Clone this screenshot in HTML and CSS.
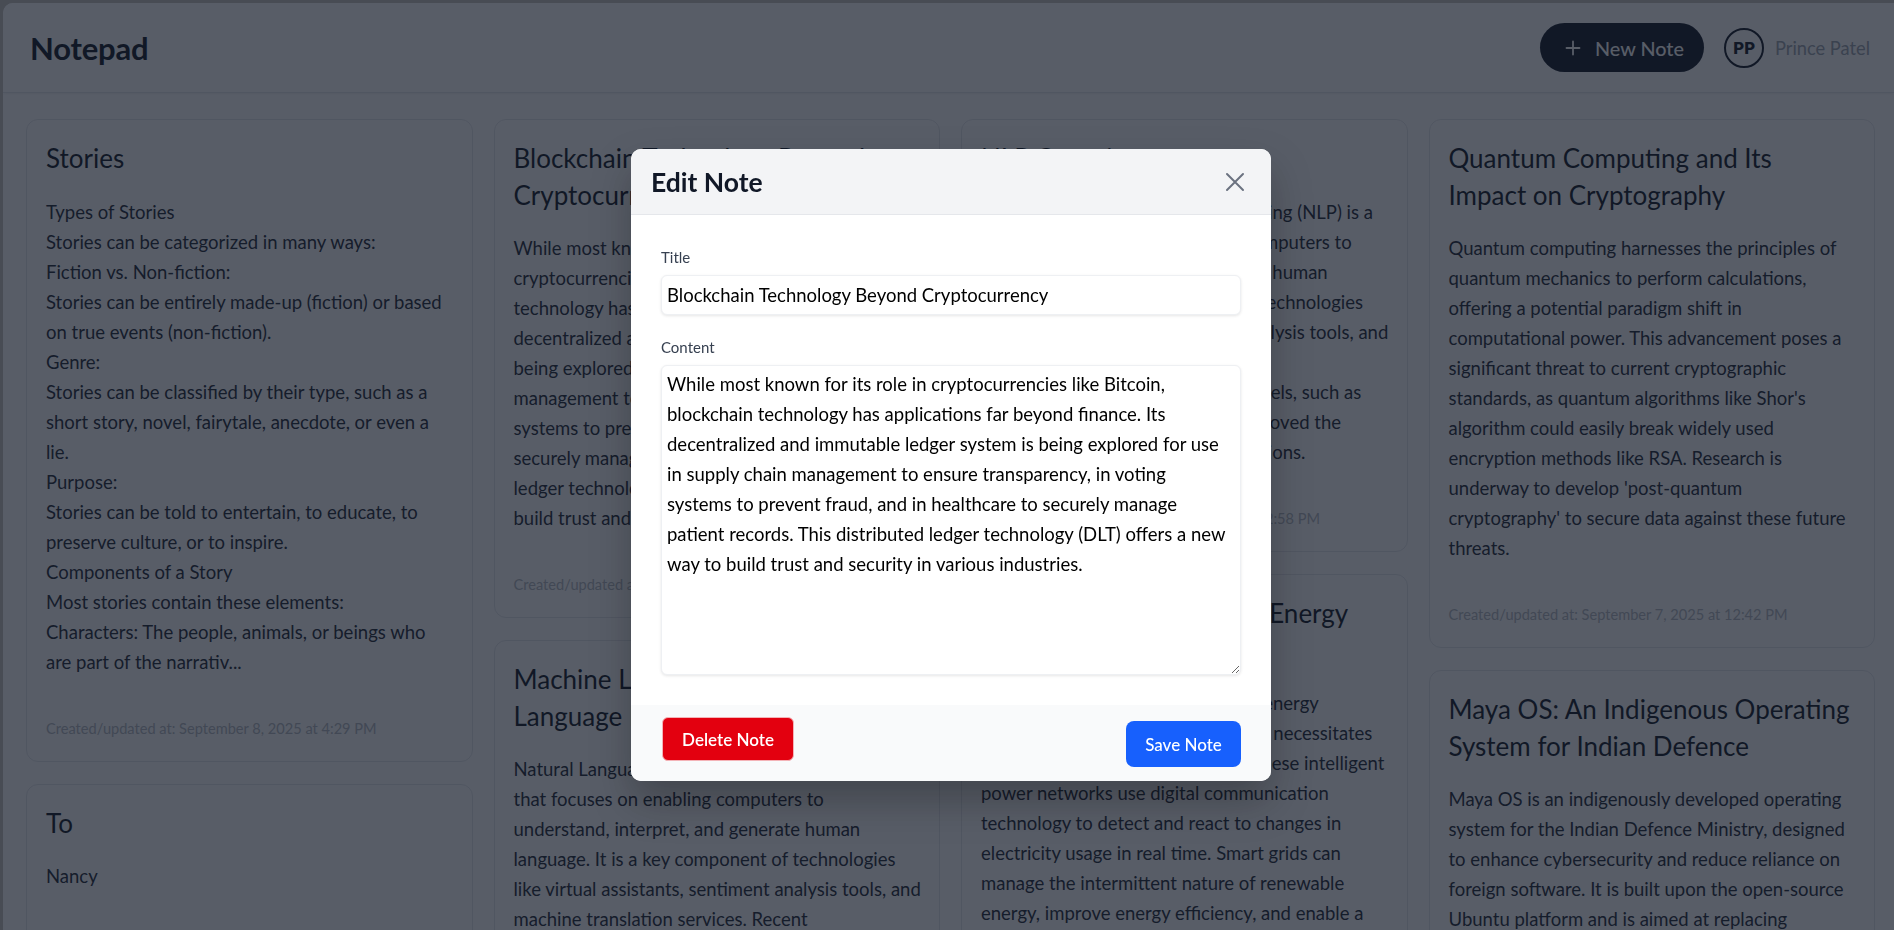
FILE: index.html
```html
<!DOCTYPE html>
<html lang="en">
<head>
<meta charset="utf-8">
<title>Notepad</title>
<link rel="stylesheet" href="styles.css">
</head>
<body>
<div class="app">
  <header class="topbar">
    <h1 class="brand">Notepad</h1>
    <div class="actions">
      <button class="new-btn" type="button">
        <svg class="plus" viewBox="0 0 16 16" width="16" height="16" aria-hidden="true"><path d="M8 1.5v13M1.5 8h13" stroke="currentColor" stroke-width="1.8" stroke-linecap="round" fill="none"/></svg>
        <span>New Note</span>
      </button>
      <div class="user">
        <span class="avatar">PP</span>
        <span class="username">Prince Patel</span>
      </div>
    </div>
  </header>

  <main class="board">
    <div class="col">
      <article class="card">
        <h2 class="card-title">Stories</h2>
<p class="card-body">Types of Stories
Stories can be categorized in many ways:
Fiction vs. Non-fiction:
Stories can be entirely made-up (fiction) or based
on true events (non-fiction).
Genre:
Stories can be classified by their type, such as a
short story, novel, fairytale, anecdote, or even a
lie.
Purpose:
Stories can be told to entertain, to educate, to
preserve culture, or to inspire.
Components of a Story
Most stories contain these elements:
Characters: The people, animals, or beings who
are part of the narrativ...</p>
        <p class="card-meta">Created/updated at: September 8, 2025 at 4:29 PM</p>
      </article>
      <article class="card">
        <h2 class="card-title">To</h2>
<p class="card-body">Nancy</p>
        <p class="card-meta">Created/updated at: September 8, 2025 at 4:12 PM</p>
      </article>
    </div>

    <div class="col">
      <article class="card">
        <h2 class="card-title">Blockchain Technology Beyond Cryptocurrency</h2>
<p class="card-body">While most known for its role in
cryptocurrencies like Bitcoin, blockchain
technology has applications far beyond finance. Its
decentralized and immutable ledger system is
being explored for use in supply chain
management to ensure transparency, in voting
systems to prevent fraud, and in healthcare to
securely manage patient records. This distributed
ledger technology (DLT) offers a new way to
build trust and security in various industries.</p>
        <p class="card-meta">Created/updated at: September 7, 2025 at 1:05 PM</p>
      </article>
      <article class="card">
        <h2 class="card-title">Machine Learning and Natural Language Processing</h2>
<p class="card-body">Natural Language Processing (NLP) is a field of AI
that focuses on enabling computers to
understand, interpret, and generate human
language. It is a key component of technologies
like virtual assistants, sentiment analysis tools, and
machine translation services. Recent
advancements in deep learning have made these
systems far more accurate and capable.</p>
        <p class="card-meta">Created/updated at: September 7, 2025 at 12:55 PM</p>
      </article>
    </div>

    <div class="col">
      <article class="card">
        <h2 class="card-title">NLP Overview</h2>
<p class="card-body">Basically, Natural Language Processing (NLP) is a
branch that focuses on enabling computers to
understand, interpret, and generate human
language. It is a key component of technologies
like virtual assistants, sentiment analysis tools, and
machine translation models. Recent
transformer-based AI language models, such as
GPT and BERT have drastically improved the
speed and accuracy of NLP applications.</p>
        <p class="card-meta">Created/updated at: September 7, 2025 at 12:58 PM</p>
      </article>
      <article class="card">
        <h2 class="card-title">Smart Grid in Renewable Energy Management</h2>
<p class="card-body">Smart grids are revolutionizing the energy
landscape. The boom in renewables necessitates
smarter and more adaptive grids. These intelligent
power networks use digital communication
technology to detect and react to changes in
electricity usage in real time. Smart grids can
manage the intermittent nature of renewable
energy, improve energy efficiency, and enable a
more resilient power supply for homes and
industries.</p>
        <p class="card-meta">Created/updated at: September 7, 2025 at 12:50 PM</p>
      </article>
    </div>

    <div class="col">
      <article class="card">
        <h2 class="card-title">Quantum Computing and Its Impact on Cryptography</h2>
<p class="card-body">Quantum computing harnesses the principles of
quantum mechanics to perform calculations,
offering a potential paradigm shift in
computational power. This advancement poses a
significant threat to current cryptographic
standards, as quantum algorithms like Shor's
algorithm could easily break widely used
encryption methods like RSA. Research is
underway to develop 'post-quantum
cryptography' to secure data against these future
threats.</p>
        <p class="card-meta">Created/updated at: September 7, 2025 at 12:42 PM</p>
      </article>
      <article class="card">
        <h2 class="card-title">Maya OS: An Indigenous Operating System for Indian Defence</h2>
<p class="card-body">Maya OS is an indigenously developed operating
system for the Indian Defence Ministry, designed
to enhance cybersecurity and reduce reliance on
foreign software. It is built upon the open-source
Ubuntu platform and is aimed at replacing
Microsoft Windows on all defence computers
connected to the internet.</p>
        <p class="card-meta">Created/updated at: September 7, 2025 at 12:30 PM</p>
      </article>
    </div>
  </main>
</div>

<div class="overlay">
  <div class="modal" role="dialog" aria-label="Edit Note">
    <div class="modal-head">
      <h2 class="modal-title">Edit Note</h2>
      <button class="close" type="button" aria-label="Close">
        <svg viewBox="0 0 20 20" width="20" height="20" aria-hidden="true"><path d="M2 2l16 16M18 2L2 18" stroke="currentColor" stroke-width="2" stroke-linecap="round" fill="none"/></svg>
      </button>
    </div>
    <div class="modal-body">
      <label class="field-label" for="title">Title</label>
      <input class="field-input" id="title" type="text" value="Blockchain Technology Beyond Cryptocurrency">
      <label class="field-label" for="content">Content</label>
      <textarea class="field-area" id="content">While most known for its role in cryptocurrencies like Bitcoin, blockchain technology has applications far beyond finance. Its decentralized and immutable ledger system is being explored for use in supply chain management to ensure transparency, in voting systems to prevent fraud, and in healthcare to securely manage patient records. This distributed ledger technology (DLT) offers a new way to build trust and security in various industries.</textarea>
    </div>
    <div class="modal-foot">
      <button class="btn-delete" type="button">Delete Note</button>
      <button class="btn-save" type="button">Save Note</button>
    </div>
  </div>
</div>
</body>
</html>
```

FILE: styles.css
```css
* { box-sizing: border-box; }

html, body {
  margin: 0;
  height: 100%;
}

body {
  background: #c9c6c0;
  font-family: "Lato", "Open Sans", sans-serif;
  color: #1f2937;
  overflow: hidden;
}

.app {
  margin: 3px 0 0 3px;
  height: calc(100vh - 3px);
  background: #ffffff;
  border-top-left-radius: 10px;
  overflow: hidden;
}

/* ---------- header ---------- */
.topbar {
  height: 90px;
  display: flex;
  align-items: center;
  justify-content: space-between;
  padding: 0 24px 0 27px;
  background: #ffffff;
  border-bottom: 1px solid #e5e7eb;
  box-shadow: 0 1px 3px rgba(0, 0, 0, 0.06);
}

.brand {
  margin: 0;
  font-size: 31px;
  font-weight: 700;
  color: #111827;
  letter-spacing: -0.2px;
}

.actions {
  display: flex;
  align-items: center;
}

.new-btn {
  display: flex;
  align-items: center;
  gap: 14px;
  height: 49px;
  padding: 0 20px 0 25px;
  border: none;
  border-radius: 25px;
  background: #111827;
  color: #ffffff;
  font-family: inherit;
  font-size: 19.8px;
  font-weight: 500;
  margin-right: 20px;
}

.plus { display: block; }

.user {
  display: flex;
  align-items: center;
  gap: 11px;
}

.avatar {
  width: 40px;
  height: 40px;
  border-radius: 50%;
  border: 2px solid #111827;
  display: flex;
  align-items: center;
  justify-content: center;
  font-size: 17px;
  font-weight: 800;
  color: #111827;
}

.username {
  font-size: 18.3px;
  color: #9ca3af;
}

/* ---------- board ---------- */
.board {
  display: flex;
  gap: 21px;
  padding: 26px 19px 0 23px;
  align-items: flex-start;
}

.col {
  flex: 1;
  min-width: 0;
  display: flex;
  flex-direction: column;
  gap: 22px;
}

.card {
  background: #ffffff;
  border: 1px solid #e5e7eb;
  border-radius: 12px;
  padding: 20px 19px;
}

.card-title {
  margin: 0 0 20px;
  padding-right: 4px;
  font-size: 26px;
  line-height: 36.5px;
  font-weight: 400;
  color: #111827;
}

.card-body {
  margin: 0;
  font-size: 18.5px;
  line-height: 30px;
  color: #1f2937;
  white-space: pre;
}

.card-meta {
  margin: 40px 0 0;
  font-size: 14.6px;
  line-height: 24px;
  color: #b4b9c1;
}

/* ---------- modal ---------- */
.overlay {
  position: fixed;
  inset: 0;
  background: rgba(17, 24, 39, 0.7);
  display: flex;
  align-items: center;
  justify-content: center;
  padding-left: 8px;
}

.modal {
  width: 640px;
  background: #ffffff;
  border-radius: 10px;
  overflow: hidden;
  box-shadow: 0 20px 40px rgba(0, 0, 0, 0.25);
}

.modal-head {
  height: 66px;
  display: flex;
  align-items: center;
  justify-content: space-between;
  padding: 0 26px 0 20px;
  background: #f3f4f6;
  border-bottom: 1px solid #e5e7eb;
}

.modal-title {
  margin: 0;
  font-size: 26.5px;
  font-weight: 700;
  color: #111827;
}

.close {
  border: none;
  background: none;
  padding: 0;
  color: #6b7280;
  display: flex;
}

.modal-body {
  display: flex;
  flex-direction: column;
  padding: 32px 30px 30px;
}

.field-label {
  font-size: 15px;
  line-height: 20px;
  color: #374151;
  margin-bottom: 8px;
}

.field-input,
.field-area {
  font-family: inherit;
  font-size: 18.5px;
  color: #000000;
  border: 1px solid #eef0f3;
  border-radius: 6px;
  box-shadow: 0 1px 3px rgba(0, 0, 0, 0.1);
  background: #ffffff;
  outline: none;
}

.field-input {
  height: 40px;
  padding: 0 5px;
  margin-bottom: 22px;
}

.field-area {
  height: 310px;
  padding: 3px 9px 3px 5px;
  line-height: 30px;
  resize: vertical;
}

.modal-foot {
  display: flex;
  justify-content: space-between;
  align-items: flex-start;
  padding: 12px 30px 14px 31px;
  background: #f9fafb;
}

.btn-delete {
  width: 132px;
  height: 44px;
  border: 1px solid #f4b3b7;
  border-radius: 6px;
  background: #e3000f;
  color: #ffffff;
  font-family: inherit;
  font-size: 17px;
  font-weight: 600;
}

.btn-save {
  width: 115px;
  height: 46px;
  margin-top: 4px;
  border: none;
  border-radius: 8px;
  background: #1760fd;
  color: #ffffff;
  font-family: inherit;
  font-size: 17px;
  font-weight: 500;
}
```
